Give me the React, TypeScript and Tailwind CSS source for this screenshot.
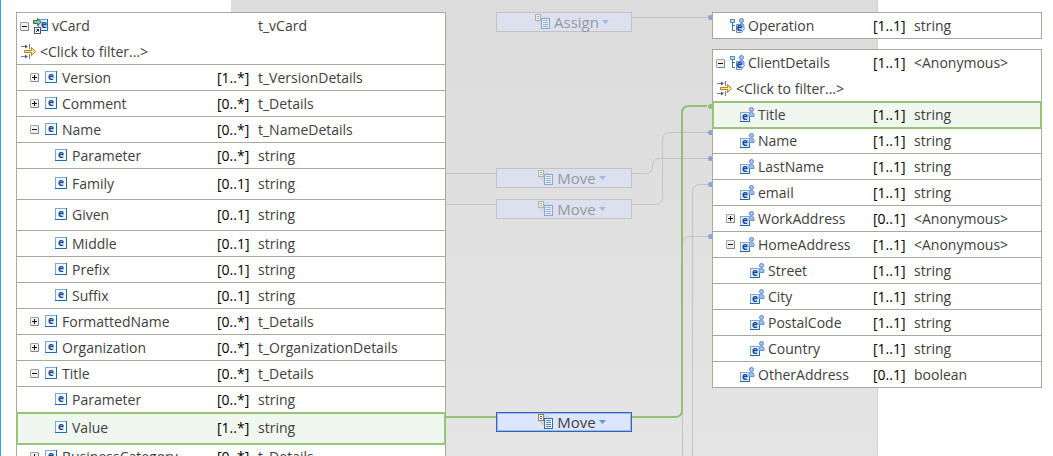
import React from "react";

type Toggle = "open" | "closed";
type IconKind = "element" | "input" | "business" | "member";

interface Row {
  name: string;
  level: number;
  card?: string;
  type: string;
  toggle?: Toggle;
  icon: IconKind;
  tall?: boolean;
  selected?: boolean;
}

const source: Row[] = [
  { name: "vCard", level: 0, type: "t_vCard", toggle: "open", icon: "input" },
  { name: "Version", level: 1, card: "[1..*]", type: "t_VersionDetails", toggle: "closed", icon: "element" },
  { name: "Comment", level: 1, card: "[0..*]", type: "t_Details", toggle: "closed", icon: "element" },
  { name: "Name", level: 1, card: "[0..*]", type: "t_NameDetails", toggle: "open", icon: "element" },
  { name: "Parameter", level: 2, card: "[0..*]", type: "string", icon: "element" },
  { name: "Family", level: 2, card: "[0..1]", type: "string", icon: "element", tall: true },
  { name: "Given", level: 2, card: "[0..1]", type: "string", icon: "element", tall: true },
  { name: "Middle", level: 2, card: "[0..1]", type: "string", icon: "element" },
  { name: "Prefix", level: 2, card: "[0..1]", type: "string", icon: "element" },
  { name: "Suffix", level: 2, card: "[0..1]", type: "string", icon: "element" },
  { name: "FormattedName", level: 1, card: "[0..*]", type: "t_Details", toggle: "closed", icon: "element" },
  { name: "Organization", level: 1, card: "[0..*]", type: "t_OrganizationDetails", toggle: "closed", icon: "element" },
  { name: "Title", level: 1, card: "[0..*]", type: "t_Details", toggle: "open", icon: "element" },
  { name: "Parameter", level: 2, card: "[0..*]", type: "string", icon: "element" },
  { name: "Value", level: 2, card: "[1..*]", type: "string", icon: "element", tall: true, selected: true },
  { name: "BusinessCategory", level: 1, card: "[0..*]", type: "t_Details", toggle: "closed", icon: "element" },
];

const operation: Row[] = [
  { name: "Operation", level: 0, card: "[1..1]", type: "string", icon: "business" },
];

const client: Row[] = [
  { name: "ClientDetails", level: 0, card: "[1..1]", type: "<Anonymous>", toggle: "open", icon: "business" },
  { name: "Title", level: 1, card: "[1..1]", type: "string", icon: "member", selected: true },
  { name: "Name", level: 1, card: "[1..1]", type: "string", icon: "member" },
  { name: "LastName", level: 1, card: "[1..1]", type: "string", icon: "member" },
  { name: "email", level: 1, card: "[1..1]", type: "string", icon: "member" },
  { name: "WorkAddress", level: 1, card: "[0..1]", type: "<Anonymous>", toggle: "closed", icon: "member" },
  { name: "HomeAddress", level: 1, card: "[1..1]", type: "<Anonymous>", toggle: "open", icon: "member" },
  { name: "Street", level: 2, card: "[1..1]", type: "string", icon: "member" },
  { name: "City", level: 2, card: "[1..1]", type: "string", icon: "member" },
  { name: "PostalCode", level: 2, card: "[1..1]", type: "string", icon: "member" },
  { name: "Country", level: 2, card: "[1..1]", type: "string", icon: "member" },
  { name: "OtherAddress", level: 1, card: "[0..1]", type: "boolean", icon: "member" },
];

function Letter({ x, y }: { x: number; y: number }) {
  return (
    <text x={x} y={y} fontSize="10" fontWeight="700" fill="#1a4590" fontFamily="Open Sans, sans-serif">
      e
    </text>
  );
}

function Person({ x, y }: { x: number; y: number }) {
  return (
    <g transform={`translate(${x} ${y})`}>
      <path d="M0.5 9.5V7.5Q0.5 5.5 3 5.5Q5.500 5.500 5.500 7.500V9.500Z" fill="#9dbcf0" stroke="#6a90d8" />
      <circle cx="3" cy="2.500" r="2" fill="#a9c5f4" stroke="#5a82cc" />
    </g>
  );
}

function NodeIcon({ kind }: { kind: IconKind }) {
  const common = { width: 16, height: 16, viewBox: "0 0 16 16", className: "shrink-0", "aria-hidden": true };
  if (kind === "element") {
    return (
      <svg {...common}>
        <rect x="2.5" y="1.5" width="11" height="11" fill="#f3f8fd" stroke="#7aabd6" />
        <path d="M2 12.5H13.5V1" fill="none" stroke="#1f6bab" />
        <Letter x={5} y={10} />
      </svg>
    );
  }
  if (kind === "input") {
    return (
      <svg {...common}>
        <rect x="5.500" y="1.500" width="9" height="11" fill="#dfebf8" stroke="#6b9fce" />
        <path d="M14.500 1V12.500H8" fill="none" stroke="#1f6bab" />
        <Letter x={8} y={10} />
        <path d="M0.500 2.500H4.500V0.500L8.500 4L4.500 7.500V5.500H0.500Z" fill="#8dbd9c" stroke="#2f7350" />
        <rect x="1.500" y="9.500" width="6" height="6" fill="#ffffff" stroke="#4a5288" />
        <path d="M3 14L6 11M3.500 11.500H5.500V13.500" fill="none" stroke="#22285a" />
      </svg>
    );
  }
  if (kind === "business") {
    return (
      <svg {...common}>
        <path d="M3.500 4V12.500H6M3.500 7.500H6" fill="none" stroke="#3c75ad" />
        <rect x="1.500" y="1.500" width="4" height="3" fill="#b9d7ee" stroke="#5b93c6" />
        <Person x={9.500} y={0} />
        <path d="M7.500 6.500H12.500L15.500 10.500L12.500 14.500H7.500Z" fill="#dbe8fa" stroke="#5b8fd0" />
        <Letter x={7.500} y={13} />
      </svg>
    );
  }
  return (
    <svg {...common}>
      <rect x="1.500" y="5.500" width="9" height="9" fill="#e4effa" stroke="#7aabd6" />
      <path d="M1 14.500H10.500V9" fill="none" stroke="#1f6bab" />
      <Letter x={3} y={13} />
      <Person x={9.500} y={0} />
    </svg>
  );
}

function ToggleButton({ state, name }: { state: Toggle; name: string }) {
  return (
    <button type="button" aria-label={`${state === "open" ? "Collapse" : "Expand"} ${name}`} aria-expanded={state === "open"} className="block">
      <svg width="9" height="9" viewBox="0 0 9 9" aria-hidden="true">
        <rect x="0.5" y="0.5" width="8" height="8" rx="0.5" fill="#efefed" stroke="#a3a3a3" />
        <path d="M1 8.5H8.5V1" fill="none" stroke="#858585" />
        <path d={state === "open" ? "M2 4.5H7" : "M2 4.5H7M4.5 2V7"} stroke="#111111" />
      </svg>
    </button>
  );
}

function FilterIcon() {
  return (
    <svg width="16" height="16" viewBox="0 0 16 16" className="shrink-0" aria-hidden="true">
      <path d="M0 2.500H5M0 12.500H5" stroke="#6a7aa0" />
      <path d="M4 0.500L7 2.500L4 4.500ZM4 10.500L7 12.500L4 14.500Z" fill="#555c80" />
      <path d="M8.500 0V5M8.500 10V15" stroke="#77778c" />
      <path d="M3.500 6.500H10.500V3.500L14.500 7.500L10.500 11.500V8.500H3.500Z" fill="#fde8a0" stroke="#bd7f1c" />
    </svg>
  );
}

const indent = ["pl-[3px]", "pl-[13px]", "pl-[23px]"];

function Tree({ label, rows, nameWidth, filter }: { label: string; rows: Row[]; nameWidth: string; filter?: boolean }) {
  const filterId = `filter-${label}`;
  return (
    <div className="border border-b-0 border-[#a9a89e] bg-white">
      <table aria-label={label} className="w-full table-fixed border-separate border-spacing-0">
        <colgroup>
          <col className={nameWidth} />
          <col className="w-[41px]" />
          <col />
        </colgroup>
        <tbody>
          {rows.map((row, i) => {
            const line = filter && i === 0 ? "" : "border-b border-[#a9a89e]";
            const height = row.tall ? "h-[31px]" : "h-[26px]";
            return (
              <React.Fragment key={i}>
                <tr className={row.selected ? "bg-[#f0f7ef] outline-2 -outline-offset-1 outline-[#98c47a]" : ""}>
                  <td className={`${line} ${height} ${indent[row.level]} p-0 whitespace-nowrap`}>
                    <div className="flex items-center">
                      <span className="mr-1 w-[9px] shrink-0">
                        {row.toggle && <ToggleButton state={row.toggle} name={row.name} />}
                      </span>
                      <NodeIcon kind={row.icon} />
                      <span className="ml-[3px]">{row.name}</span>
                    </div>
                  </td>
                  <td className={`${line} p-0 whitespace-nowrap text-black`}>{row.card}</td>
                  <td className={`${line} p-0 whitespace-nowrap`}>{row.type}</td>
                </tr>
                {filter && i === 0 && (
                  <tr>
                    <td colSpan={3} className="h-[26px] border-b border-[#a9a89e] p-0 pl-1">
                      <div className="flex items-center gap-[3px]">
                        <label htmlFor={filterId} aria-label={`Filter ${label}`}>
                          <FilterIcon />
                        </label>
                        <input
                          id={filterId}
                          type="text"
                          placeholder="<Click to filter...>"
                          className="h-5 min-w-0 flex-1 bg-transparent outline-none placeholder:text-[#404040]"
                        />
                      </div>
                    </td>
                  </tr>
                )}
              </React.Fragment>
            );
          })}
        </tbody>
      </table>
    </div>
  );
}

function Transform({ label, place, active }: { label: string; place: string; active?: boolean }) {
  const look = active
    ? "border-[#3366bb] bg-[#dde5ff] ring-1 ring-inset ring-[#9db9ea]"
    : "border-[#c3c3c3] bg-[#dde1ef] text-[#96989f]";
  return (
    <button type="button" className={`absolute left-[50px] flex h-5 w-[136px] items-center justify-center gap-[3px] border pl-4 text-[15px] leading-none ${place} ${look}`}>
      <svg width="16" height="16" viewBox="0 0 16 16" className={active ? "" : "opacity-50"} aria-hidden="true">
        <path d="M6 1L14 4L8 15L1 7Z" fill="#c9c9c9" opacity="0.7" />
        <rect x="0.5" y="0.5" width="5" height="6" fill="#fffef4" stroke="#8d8550" />
        <path d="M2 2.5H4M2 4.5H4" stroke="#3b69a8" />
        <rect x="6.5" y="4.5" width="8" height="10" fill="#eaf3fc" stroke="#2d73ad" />
        <path d="M8 6.500H13M8 8.500H13M8 10.500H13M8 12.500H13" stroke="#6286ba" />
      </svg>
      <span>{label}</span>
      <svg width="7" height="4" viewBox="0 0 7 4" className={active ? "" : "opacity-60"} aria-hidden="true">
        <path d="M0 0H7L3.5 4Z" fill={active ? "#5a9bd8" : "#7ba0e0"} />
      </svg>
    </button>
  );
}

function Links() {
  return (
    <svg className="absolute inset-0 h-full w-full" aria-hidden="true">
      <g fill="none" stroke="#c3c3c1">
        <path d="M186 17.5H264" />
        <path d="M0 173.5H50M186 173.5H199Q206.500 173.500 206.500 166Q206.500 158.500 214 158.500H264" />
        <path d="M0 204.500H50M186 204.500H209Q216.500 204.500 216.500 197V140Q216.500 132.500 224 132.500H264" />
        <path d="M264 184.500H254Q246.500 184.500 246.500 192V3000" />
        <path d="M264 236.500H244Q236.500 236.500 236.500 244V3000" />
      </g>
      <path d="M0 417H50M186 417H229Q236 417 236 410V113Q236 106 243 106H261" fill="none" stroke="#93c074" strokeWidth="2" />
      <g fill="#88a5d6">
        <circle cx="264.500" cy="17.500" r="2.500" />
        <circle cx="264.500" cy="132.500" r="2.500" />
        <circle cx="264.500" cy="158.500" r="2.500" />
        <circle cx="264.500" cy="184.500" r="2.500" />
        <circle cx="264.500" cy="236.500" r="2.500" />
      </g>
      <circle cx="264.500" cy="106.500" r="2.500" fill="#93c074" />
    </svg>
  );
}

export default function App() {
  return (
    <main className="relative grid h-screen grid-cols-[430fr_266px_330fr] items-start overflow-hidden border-l border-[#3399ff] bg-white pr-[11px] pl-[15px] font-['Open_Sans','Noto_Sans',sans-serif] text-[14px] leading-5 text-[#404040]">
      <div className="absolute inset-y-0 right-[175px] left-[230px] border-r border-[#d0d0d0] bg-linear-to-b from-[#dcdcdc] to-[#e4e4e4]" />
      <section className="relative min-w-0 pt-3">
        <Tree label="vCard" rows={source} nameWidth="w-[200px]" filter />
      </section>
      <section className="relative h-full" aria-label="Mappings">
        <Links />
        <Transform label="Assign" place="top-[12px]" />
        <Transform label="Move" place="top-[168px]" />
        <Transform label="Move" place="top-[199px]" />
        <Transform label="Move" place="top-[412px]" active />
      </section>
      <section className="relative flex min-w-0 flex-col gap-2.5 pt-3">
        <Tree label="Operation" rows={operation} nameWidth="w-[160px]" />
        <Tree label="ClientDetails" rows={client} nameWidth="w-[160px]" filter />
      </section>
    </main>
  );
}
